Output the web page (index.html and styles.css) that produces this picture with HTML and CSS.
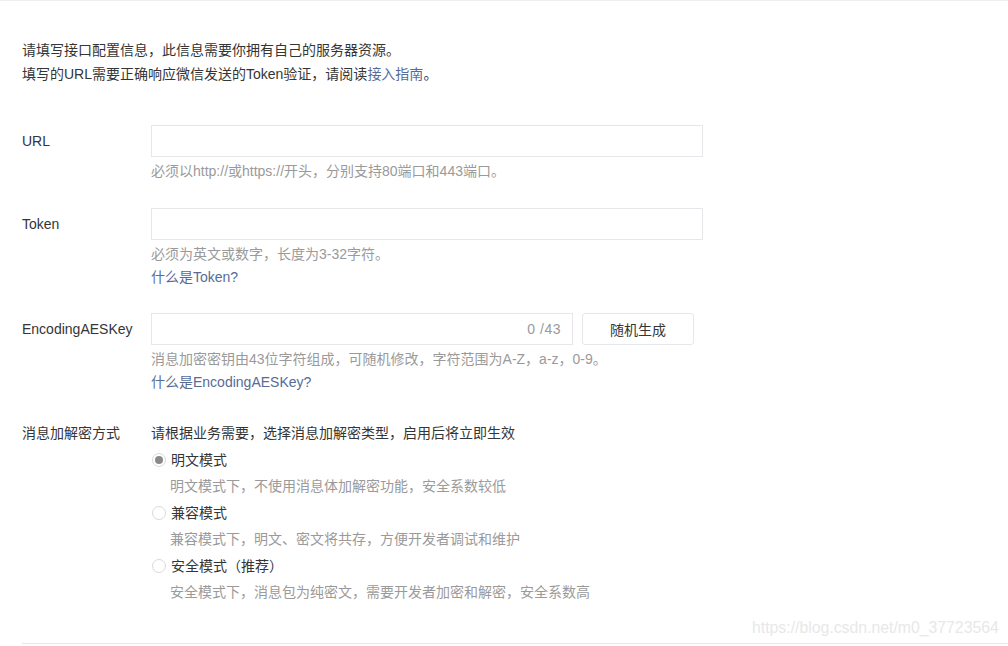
FILE: index.html
```html
<!DOCTYPE html>
<html lang="zh-CN">
<head>
<meta charset="utf-8">
<title>服务器配置</title>
<link rel="stylesheet" href="styles.css">
</head>
<body>
<div class="page">
  <div class="intro">
    <p>请填写接口配置信息，此信息需要你拥有自己的服务器资源。</p>
    <p>填写的URL需要正确响应微信发送的Token验证，请阅读<a class="link" href="#">接入指南</a>。</p>
  </div>

  <div class="form">
    <div class="row first-row">
      <div class="label">URL</div>
      <div class="field">
        <div class="input wide"></div>
        <p class="help">必须以http://或https://开头，分别支持80端口和443端口。</p>
      </div>
    </div>

    <div class="row">
      <div class="label">Token</div>
      <div class="field">
        <div class="input wide"></div>
        <p class="help">必须为英文或数字，长度为3-32字符。</p>
        <p class="help"><a class="link" href="#">什么是Token?</a></p>
      </div>
    </div>

    <div class="row">
      <div class="label">EncodingAESKey</div>
      <div class="field">
        <div class="input-group">
          <div class="input narrow"><span class="counter">0 /43</span></div>
          <button class="btn" type="button">随机生成</button>
        </div>
        <p class="help">消息加密密钥由43位字符组成，可随机修改，字符范围为A-Z，a-z，0-9。</p>
        <p class="help"><a class="link" href="#">什么是EncodingAESKey?</a></p>
      </div>
    </div>

    <div class="row mode-row">
      <div class="label mode-label">消息加解密方式</div>
      <div class="field mode-field">
        <p class="mode-desc">请根据业务需要，选择消息加解密类型，启用后将立即生效</p>
        <div class="radio-item">
          <span class="radio checked"></span><span class="radio-text">明文模式</span>
        </div>
        <p class="radio-help">明文模式下，不使用消息体加解密功能，安全系数较低</p>
        <div class="radio-item">
          <span class="radio"></span><span class="radio-text">兼容模式</span>
        </div>
        <p class="radio-help">兼容模式下，明文、密文将共存，方便开发者调试和维护</p>
        <div class="radio-item">
          <span class="radio"></span><span class="radio-text">安全模式（推荐）</span>
        </div>
        <p class="radio-help">安全模式下，消息包为纯密文，需要开发者加密和解密，安全系数高</p>
      </div>
    </div>
  </div>

  <div class="footer-line"></div>
  <div class="watermark">https://blog.csdn.net/m0_37723564</div>
</div>
</body>
</html>
```

FILE: styles.css
```css
html, body {
  margin: 0;
  padding: 0;
  background: #ffffff;
}

body {
  font-family: "Liberation Sans", "Noto Sans CJK SC", sans-serif;
  font-size: 14px;
  color: #353535;
}

p {
  margin: 0;
}

.page {
  position: relative;
  border-top: 1px solid #eeeeee;
  min-height: 645px;
  box-sizing: border-box;
}

.link {
  color: #576b95;
  text-decoration: none;
}

.intro {
  padding: 37px 0 0 22px;
  line-height: 24px;
}

.form {
  margin-top: 39px;
  padding-left: 22px;
}

.row {
  display: flex;
  margin-bottom: 24px;
}

.row.first-row {
  margin-bottom: 25px;
}

.label {
  width: 129px;
  flex-shrink: 0;
  line-height: 32px;
  color: #353535;
}

.field {
  display: flex;
  flex-direction: column;
}

.input {
  box-sizing: border-box;
  height: 32px;
  border: 1px solid #e7e7eb;
  background: #fff;
}

.input.wide {
  width: 552px;
}

.input-group {
  display: flex;
  gap: 9px;
}

.input.narrow {
  width: 422px;
  display: flex;
  align-items: center;
  justify-content: flex-end;
  padding-right: 11px;
}

.counter {
  color: #9a9a9a;
  font-size: 14px;
  letter-spacing: 0.5px;
}

.btn {
  box-sizing: border-box;
  width: 112px;
  height: 32px;
  border: 1px solid #e4e8eb;
  border-radius: 3px;
  background: #ffffff;
  color: #353535;
  font-family: "Liberation Sans", "Noto Sans CJK SC", sans-serif;
  font-size: 14px;
  padding: 0;
}

.help {
  line-height: 23px;
  color: #9a9a9a;
}

.help:first-of-type {
  margin-top: 3px;
}

.mode-row {
  padding-top: 2px;
  margin-bottom: 0;
}

.mode-label,
.mode-field {
  line-height: 26.5px;
}

.radio-item {
  display: flex;
  align-items: center;
  height: 26.5px;
}

.radio {
  box-sizing: border-box;
  width: 14px;
  height: 14px;
  margin-left: 1px;
  margin-right: 5px;
  border: 1px solid #d9d9d9;
  border-radius: 50%;
  background: #fff;
  position: relative;
}

.radio.checked::after {
  content: "";
  position: absolute;
  left: 2px;
  top: 2px;
  width: 8px;
  height: 8px;
  border-radius: 50%;
  background: #8a8a8a;
}

.radio-text {
  color: #353535;
}

.radio-help {
  padding-left: 19px;
  color: #9a9a9a;
}

.footer-line {
  margin: 37px 0 0 22px;
  height: 1px;
  background: #e7e7eb;
}

.watermark {
  position: absolute;
  left: 752px;
  top: 618px;
  font-family: "Liberation Sans", sans-serif;
  font-size: 15.8px;
  line-height: 18px;
  color: #e8e8e8;
  white-space: nowrap;
}
```
